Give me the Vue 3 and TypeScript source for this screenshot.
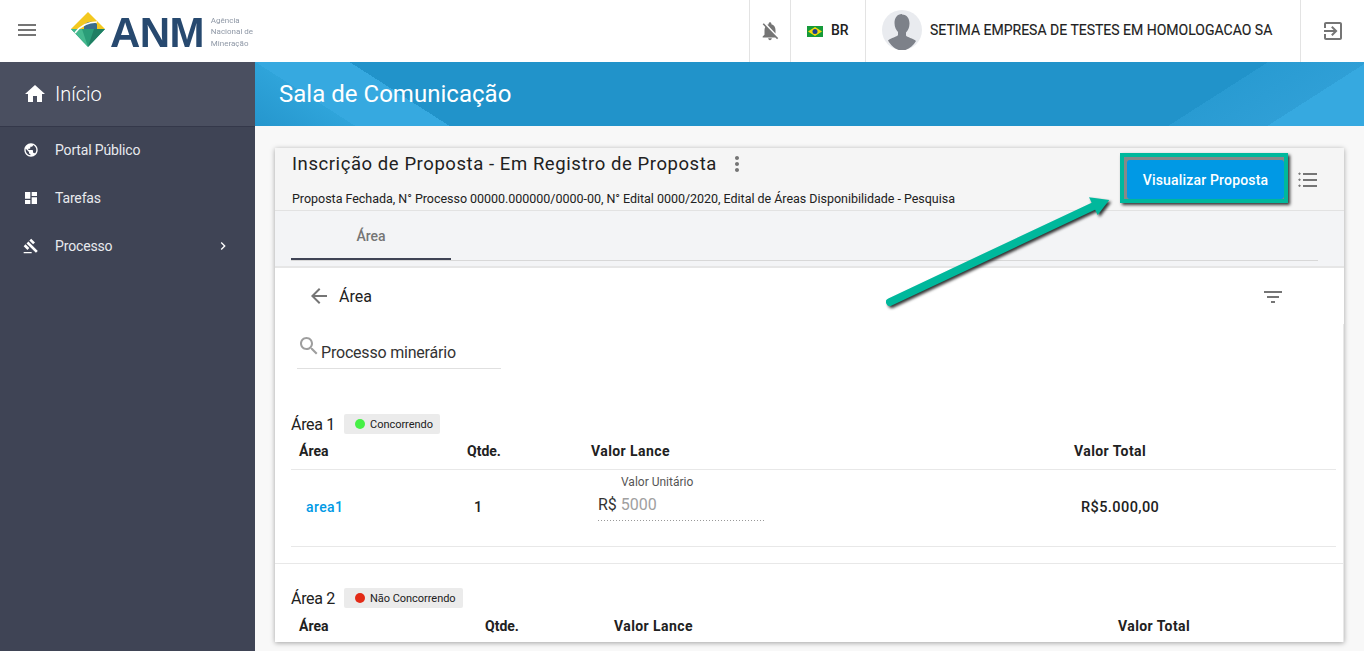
<script setup lang="ts">
interface Row { area: string; qty: string; unit: string; total: string }
interface Section { title: string; status: string; color: string; cols: string; rows: Row[] }
const menu = [
  { label: 'Portal Público', icon: 'globe', arrow: false },
  { label: 'Tarefas', icon: 'dash', arrow: false },
  { label: 'Processo', icon: 'gavel', arrow: true },
]
const sections: Section[] = [
  { title: 'Área 1', status: 'Concorrendo', color: '#46f046', cols: 'c1', rows: [{ area: 'area1', qty: '1', unit: '5000', total: 'R$5.000,00' }] },
  { title: 'Área 2', status: 'Não Concorrendo', color: '#e32b17', cols: 'c2', rows: [] },
]
</script>

<template>
  <div class="page">
    <header class="top">
      <button class="menu-btn" aria-label="menu">
        <svg width="24" height="24" viewBox="0 0 24 24"><path fill="#757575" d="M3 18h18v-2H3v2zm0-5h18v-2H3v2zm0-7v2h18V6H3z" /></svg>
      </button>
      <div class="logo">
        <svg width="36" height="36" viewBox="0 0 36 36" class="gem">
          <path fill="#f3c81f" d="M18 0 L35 17 L1 17 Z" />
          <path fill="#2a9d78" d="M1 17 L35 17 L18 35 Z" />
          <path fill="#45b98f" d="M1 17 L12 17 L18 35 Z" />
          <path fill="#1f7f63" d="M24 17 L35 17 L18 35 Z" />
          <path fill="#3a6d8c" d="M14 13 C18 9 23 9 27 12 L27 17 L14 17 Z" />
          <path fill="none" stroke="#fff" stroke-width="1.6" d="M5 21 C11 13 18 10 27 10" />
        </svg>
        <span class="anm">ANM</span>
        <span class="agency">Agência<br />Nacional de<br />Mineração</span>
      </div>
      <div class="spacer"></div>
      <div class="cell bell">
        <svg width="22" height="22" viewBox="0 0 24 24"><path fill="#757575" d="M20 18.69 7.84 6.14 5.27 3.49 4 4.76l2.8 2.8v.01c-.52.99-.8 2.16-.8 3.42v5l-2 2v1h13.73l2 2L21 19.72l-1-1.03zM12 22c1.11 0 2-.89 2-2h-4c0 1.11.89 2 2 2zm6-7.32V11c0-3.08-1.64-5.64-4.5-6.32V4c0-.83-.67-1.5-1.5-1.5s-1.5.67-1.5 1.5v.68c-.15.03-.29.08-.42.12-.1.03-.2.07-.3.11h-.01c-.2.08-.4.17-.59.27-.01 0-.01 0-.02.01L18 14.68z" /></svg>
      </div>
      <div class="cell lang">
        <svg width="16" height="11" viewBox="0 0 16 11"><rect width="16" height="11" fill="#159a3a" /><path fill="#f5d90a" d="M8 1 15 5.500 8 10 1 5.500Z" /><circle cx="8" cy="5.500" r="2.500" fill="#1d3f8f" /></svg>
        <span>BR</span>
      </div>
      <div class="cell user">
        <svg width="40" height="40" viewBox="0 0 40 40" class="avatar">
          <ellipse cx="20" cy="20" rx="20" ry="20" fill="#e9ebef" />
          <path fill="#7d8189" d="M20 4.500c5 0 7.500 4 7.500 9 0 4-1.500 7-3.500 9v3c1 2 7 2.500 10 5.500-3 5-8 9.500-14 9.500S9 35.500 6 30.500c3-3 9-3.500 10-5.500v-3c-2-2-3.500-5-3.500-9 0-5 2.500-9 7.500-9z" />
        </svg>
        <span>SETIMA EMPRESA DE TESTES EM HOMOLOGACAO SA</span>
      </div>
      <div class="cell exit">
        <svg width="24" height="24" viewBox="0 0 24 24"><path fill="#757575" d="M10.090 15.590 11.500 17l5-5-5-5-1.410 1.410L12.670 11H3v2h9.670l-2.580 2.590zM19 3H5c-1.110 0-2 .9-2 2v4h2V5h14v14H5v-4H3v4c0 1.100.89 2 2 2h14c1.100 0 2-.9 2-2V5c0-1.100-.9-2-2-2z" /></svg>
      </div>
    </header>

    <div class="main">
      <aside class="side">
        <div class="home">
          <svg width="24" height="24" viewBox="0 0 24 24"><path fill="#fff" d="M10 20v-6h4v6h5v-8h3L12 3 2 12h3v8z" /></svg>
          <span>Início</span>
        </div>
        <nav class="nav">
          <div v-for="m in menu" :key="m.label" class="nav-item">
            <svg width="16" height="16" viewBox="0 0 24 24" class="nav-icon">
              <path v-if="m.icon === 'globe'" fill="#fff" d="M12 2C6.480 2 2 6.480 2 12s4.480 10 10 10 10-4.480 10-10S17.520 2 12 2zm-1 17.930c-3.950-.49-7-3.850-7-7.930 0-.62.08-1.210.21-1.790L9 15v1c0 1.100.9 2 2 2v1.930zm6.900-2.540c-.26-.81-1-1.390-1.900-1.390h-1v-3c0-.55-.45-1-1-1H8v-2h2c.55 0 1-.45 1-1V7h2c1.100 0 2-.9 2-2v-.41c2.930 1.190 5 4.060 5 7.410 0 2.080-.8 3.970-2.100 5.390z" />
              <path v-else-if="m.icon === 'dash'" fill="#fff" d="M3 13h8V3H3v10zm0 8h8v-6H3v6zm10 0h8V11h-8v10zm0-18v6h8V3h-8z" />
              <path v-else fill="#fff" d="M1 21h12v2H1zM5.245 8.070l2.830-2.827 14.140 14.142-2.828 2.828zM12.317 1l5.657 5.656-2.830 2.830-5.654-5.660zM3.825 9.485l5.657 5.657-2.828 2.828-5.657-5.657z" />
            </svg>
            <span class="nav-label">{{ m.label }}</span>
            <svg v-if="m.arrow" class="nav-arrow" width="16" height="16" viewBox="0 0 24 24"><path fill="#fff" d="M10 6 8.590 7.410 13.170 12l-4.580 4.590L10 18l6-6z" /></svg>
          </div>
        </nav>
      </aside>

      <main class="content">
        <div class="banner"><h1>Sala de Comunicação</h1></div>
        <section class="card">
          <div class="card-head">
            <div class="head-text">
              <div class="title-line">
                <h2>Inscrição de Proposta - Em Registro de Proposta</h2>
                <svg width="24" height="24" viewBox="0 0 24 24"><path fill="#757575" d="M12 8c1.100 0 2-.9 2-2s-.9-2-2-2-2 .9-2 2 .9 2 2 2zm0 2c-1.100 0-2 .9-2 2s.9 2 2 2 2-.9 2-2-.9-2-2-2zm0 6c-1.100 0-2 .9-2 2s.9 2 2 2 2-.9 2-2-.9-2-2-2z" /></svg>
              </div>
              <p class="sub">Proposta Fechada, N° Processo 00000.000000/0000-00, N° Edital 0000/2020, Edital de Áreas Disponibilidade - Pesquisa</p>
            </div>
            <div class="highlight"><button class="view-btn">Visualizar Proposta</button></div>
            <svg class="list-icon" width="24" height="24" viewBox="0 0 24 24"><path fill="#757575" d="M7 5h14v2H7zM7 11h14v2H7zM7 17h14v2H7zM2.200 5.300h1V4.500h.8v.8h.8v.9H4v.8h-.8v-.8h-1zM2.200 11.300h1v-.8h.8v.8h.8v.9H4v.8h-.8v-.8h-1zM2.200 17.300h1v-.8h.8v.8h.8v.9H4v.8h-.8v-.8h-1z" /></svg>
          </div>
          <div class="tabs-wrap">
            <div class="tabs"><div class="tab">Área</div></div>
          </div>
          <div class="body">
            <div class="sub-head">
              <svg width="24" height="24" viewBox="0 0 24 24"><path fill="#757575" d="M20 11H7.830l5.590-5.590L12 4l-8 8 8 8 1.410-1.410L7.830 13H20v-2z" /></svg>
              <span class="sub-title">Área</span>
              <svg class="filter" width="24" height="24" viewBox="0 0 24 24"><path fill="#757575" d="M10 18h4v-2h-4v2zM3 6v2h18V6H3zm3 7h12v-2H6v2z" /></svg>
            </div>
            <div class="search">
              <svg width="24" height="24" viewBox="0 0 24 24"><path fill="#9e9e9e" d="M15.500 14h-.79l-.28-.27C15.410 12.590 16 11.110 16 9.500 16 5.910 13.090 3 9.500 3S3 5.910 3 9.500 5.910 16 9.500 16c1.610 0 3.090-.59 4.230-1.570l.27.28v.79l5 4.990L20.490 19l-4.990-5zm-6 0C7.010 14 5 11.990 5 9.500S7.010 5 9.500 5 14 7.010 14 9.500 11.990 14 9.500 14z" /></svg>
              <span>Processo minerário</span>
            </div>
            <div v-for="(s, i) in sections" :key="s.title" class="section" :class="{ first: i === 0 }">
              <div class="sec-title">
                <span class="sec-name">{{ s.title }}</span>
                <span class="badge"><i class="dot" :style="{ background: s.color }"></i>{{ s.status }}</span>
              </div>
              <div class="grid th" :class="s.cols">
                <span>Área</span><span>Qtde.</span><span>Valor Lance</span><span>Valor Total</span>
              </div>
              <div v-for="r in s.rows" :key="r.area" class="grid td" :class="s.cols">
                <a class="link">{{ r.area }}</a>
                <span class="qty">{{ r.qty }}</span>
                <div class="bid">
                  <span class="bid-label">Valor Unitário</span>
                  <div class="bid-input"><span class="cur">R$</span><span class="ph">{{ r.unit }}</span></div>
                </div>
                <span class="total">{{ r.total }}</span>
              </div>
            </div>
          </div>
        </section>
      </main>
    </div>

    <svg class="arrow" width="240" height="125" viewBox="0 0 240 125">
      <path fill="none" stroke="#00b89c" stroke-width="8" stroke-linecap="round" d="M8 116 L214 19" />
      <path fill="#00b89c" d="M227.300 14 L207 11.300 L215.700 29 Z" />
    </svg>
  </div>
</template>

<style>
html, body { margin: 0; height: 100%; overflow: hidden; background: #f8f8f8; }
</style>

<style scoped>
.page { position: relative; width: 1364px; height: 651px; overflow: hidden; font-family: Roboto, "Liberation Sans", sans-serif; color: #212121; background: #f8f8f8; }
.top { display: flex; align-items: stretch; height: 62px; background: #fff; }
.menu-btn { width: 54px; padding: 0 0 2px; border: 0; background: none; display: flex; align-items: center; justify-content: center; }
.logo { display: flex; align-items: center; margin-left: 16px; filter: blur(.4px); }
.gem { margin-right: 4px; margin-top: -3px; width: 36px; height: 36px; }
.anm { font: 700 42px/1 "Liberation Sans", sans-serif; color: #27496f; letter-spacing: -.6px; margin-top: 3px; }
.agency { font-size: 8px; line-height: 11.500px; color: #8f98a6; margin-left: 7px; margin-top: 2px; }
.spacer { flex: 1; }
.cell { display: flex; align-items: center; border-left: 1px solid #e3e3e3; box-sizing: border-box; }
.bell { width: 41px; justify-content: center; }
.lang { width: 75px; padding-left: 16px; gap: 8px; font-size: 14px; font-weight: 500; }
.lang span { margin-top: -2px; }
.user { width: 435px; padding-left: 16px; font-size: 14px; gap: 8px; color: #212121; -webkit-text-stroke: .15px #212121; }
.user span { margin-top: -2px; white-space: nowrap; }
.avatar { flex: none; margin-top: -2px; }
.exit { width: 64px; padding-left: 20px; }

.main { display: flex; height: 589px; }
.side { width: 255px; flex: none; background: #3f4455; color: #e8eaee; }
.home { height: 65px; box-sizing: border-box; background: #4a4f60; border-bottom: 1px solid #34384a; display: flex; align-items: center; padding-left: 23px; gap: 8px; font-size: 20px; font-weight: 300; color: #fff; }
.nav-item { height: 48px; display: flex; align-items: center; padding-left: 23px; font-size: 14px; position: relative; top: -1px; letter-spacing: -.15px; }
.nav-icon { flex: none; }
.nav-label { margin-left: 16px; }
.nav-arrow { margin-left: auto; margin-right: 24px; }

.content { flex: 1; min-width: 0; }
.banner { height: 64px; display: flex; align-items: center; padding-left: 24px; background:
  linear-gradient(32.6deg, #2596cd 0, #2fa4da 8.300%, #36a9e0 8.300%, #36a9e0 16.100%, transparent 16.100%),
  linear-gradient(147.4deg, #2193ca 83.800%, #299bd2 83.800%, #2f9fd6 92%, #36a9e0 92%); }
.banner h1 { margin: 0; font-size: 24px; font-weight: 400; color: #fff; letter-spacing: .02px; margin-top: -1px; }

.card { margin: 22px 20px 0; height: 494px; background: #fff; box-shadow: 0 1px 5px rgba(0,0,0,.35); overflow: hidden; }
.card-head { height: 63px; box-sizing: border-box; background: #f5f5f5; border-bottom: 1px solid #e2e2e2; display: flex; align-items: flex-start; padding: 0 0 0 17px; position: relative; }
.head-text { flex: 1; min-width: 0; }
.title-line { display: flex; align-items: center; height: 30px; margin-top: 1px; gap: 8px; }
.title-line h2 { margin: 0; font-size: 18.500px; font-weight: 400; color: #212121; letter-spacing: .57px; }
.sub { margin: 12px 0 0; font-size: 12.500px; line-height: 15px; color: #212121; white-space: nowrap; letter-spacing: -.026px; }
.highlight { margin-top: 5px; border: 4px solid #00b89c; box-shadow: 2px 2px 3px #333; background: #888; padding: 3px 0 0 3px; box-sizing: border-box; width: 168px; height: 50px; flex: none; }
.view-btn { width: 100%; height: 100%; border: 0; border-radius: 3px; background: #0099e5; color: #fff; font: 500 14px Roboto, sans-serif; letter-spacing: .18px; padding: 0; display: block; }
.list-icon { margin: 20px 24px 0 8px; flex: none; }

.tabs-wrap { height: 57px; box-sizing: border-box; background: #f3f4f6; border-bottom: 2px solid #e6e6e6; padding: 0 26px 0 16px; }
.tabs { height: 49px; border-bottom: 1px solid #d8d8d8; box-sizing: content-box; }
.tab { width: 160px; height: 47px; box-sizing: content-box; border-bottom: 2px solid #3f4455; text-align: center; font-size: 14px; font-weight: 500; color: #757575; line-height: 50px; }

.body { position: relative; }
.body::after { content: ""; position: absolute; right: 0; top: 56px; bottom: 0; width: 1px; background: #e8e8e8; }
.sub-head { display: flex; align-items: center; height: 56px; padding-left: 32px; }
.sub-title { font-size: 16px; margin-left: 8px; }
.filter { margin-left: auto; margin-right: 59px; margin-top: 2px; }
.search { margin-left: 22px; width: 204px; height: 45px; box-sizing: border-box; border-bottom: 1px solid #e0e0e0; display: flex; align-items: flex-start; font-size: 16px; color: #333; padding-top: 10px; letter-spacing: -.2px; }
.search svg { flex: none; }
.search span { margin-top: 9px; white-space: nowrap; }
.section { padding: 0 8px 0 16px; border-top: 1px solid #e8e8e8; height: 79px; }
.section.first { border-top: 0; margin-top: 45px; height: 149px; }
.sec-title { display: flex; align-items: center; gap: 9px; font-size: 16px; height: 20px; padding-top: 24px; }
.first .sec-title { padding-top: 0; }
.sec-name { letter-spacing: -.3px; }
.badge { display: inline-flex; align-items: center; height: 20px; padding: 0 7px 0 11px; background: #ebebeb; border-radius: 2px; font-size: 11px; color: #212121; letter-spacing: -.04px; }
.dot { width: 10px; height: 10px; border-radius: 50%; margin-right: 5px; }
.grid { display: grid; align-items: center; }
.c1 { grid-template-columns: 168px 124px 483px 1fr; }
.c2 { grid-template-columns: 186px 129px 504px 1fr; }
.th { font-size: 14px; font-weight: 700; height: 35px; padding-left: 8px; }
.th span:nth-child(n+3) { letter-spacing: .42px; }
.first .th { border-bottom: 1px solid #e8e8e8; height: 34px; padding-bottom: 1px; }
.td { height: 76px; border-bottom: 1px solid #e8e8e8; padding-left: 8px; padding-bottom: 0; }
.link { color: #0099e5; font-size: 14px; font-weight: 500; margin-left: 7px; letter-spacing: .4px; margin-top: -2px; }
.qty { font-size: 14.500px; font-weight: 500; margin-left: 7px; margin-top: -2px; }
.bid { margin-left: 7px; align-self: start; padding-top: 5px; }
.bid-label { display: block; font-size: 12px; color: #555; margin-left: 23px; line-height: 14px; }
.bid-input { width: 166px; height: 32px; box-sizing: border-box; display: flex; align-items: center; gap: 4px; font-size: 16px; padding-bottom: 2px; background: linear-gradient(90deg, #999 1px, transparent 1px) left bottom / 3px 1px repeat-x; }
.cur { color: #333; }
.ph { color: #a0a0a0; }
.total { font-size: 14.500px; font-weight: 500; margin-left: 7px; letter-spacing: .42px; margin-top: -2px; }

.arrow { position: absolute; left: 882px; top: 186px; filter: drop-shadow(2px 2px 1.500px rgba(0,0,0,.8)); }
</style>
